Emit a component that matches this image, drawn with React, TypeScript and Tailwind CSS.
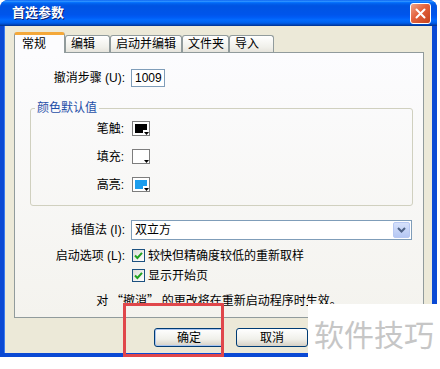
import React from "react";

function Swatch({ fill }: { fill: string }) {
  return (
    <div className="relative h-[15px] w-[18px] border border-[#7d7d7d] bg-white p-[2px]">
      <div className={`h-full w-full ${fill}`} />
      <div className="absolute bottom-0 right-0 flex h-[5px] w-[6px] items-end justify-center bg-white">
        <svg width="5" height="3" viewBox="0 0 5 3">
          <path d="M0 0H5L2.5 3Z" fill="#000" />
        </svg>
      </div>
    </div>
  );
}

function Check({ label }: { label: string }) {
  return (
    <div className="flex items-center gap-[3px]">
      <div className="flex h-[13px] w-[13px] items-center justify-center border border-[#1c5180] bg-[linear-gradient(135deg,#dcdcd7,#ffffff)]">
        <svg width="9" height="9" viewBox="0 0 9 9">
          <path d="M1 4.5L3.4 7L8 1.8" fill="none" stroke="#21a121" strokeWidth="2" />
        </svg>
      </div>
      <span>{label}</span>
    </div>
  );
}

const tabs = [
  { label: "编辑", w: "w-[45px]" },
  { label: "启动并编辑", w: "w-[72px]" },
  { label: "文件夹", w: "w-[47px]" },
  { label: "导入", w: "w-[45px]" },
];

export default function App() {
  return (
    <div className="relative h-[369px] w-[440px] overflow-hidden bg-white font-['Liberation_Sans','Noto_Sans_CJK_SC',sans-serif] text-[12px] leading-[14px] text-black">
      <div className="flex h-[357px] w-[437px] flex-col rounded-t-[8px] bg-[#0a49d4]">
        {/* title bar */}
        <div className="flex h-[26px] items-center justify-between rounded-t-[8px] bg-[linear-gradient(#0058ee_0%,#3593ff_4%,#288eff_6%,#127dff_8%,#036ffc_10%,#0262ee_14%,#0057e5_20%,#0054e3_24%,#0055eb_56%,#005bf5_66%,#026afe_76%,#0062ef_86%,#0052d6_92%,#0040ab_96%,#003092_100%)] pl-[12px] pr-[6px]">
          <span className="text-[13px] font-bold text-white [text-shadow:1px_1px_0_#0a1e6e]">首选参数</span>
          <div className="flex h-[21px] w-[21px] items-center justify-center rounded-[3px] border border-white bg-[linear-gradient(135deg,#f0a58a,#e3613b_45%,#c4421d)]">
            <svg width="11" height="11" viewBox="0 0 11 11">
              <path d="M1.5 1.5L9.5 9.5M9.5 1.5L1.5 9.5" stroke="#fff" strokeWidth="2" strokeLinecap="round" />
            </svg>
          </div>
        </div>

        {/* body */}
        <div className="ml-[4px] mr-[5px] mb-[4px] flex flex-1 flex-col border-l border-[#3a7cf0] bg-[#ece9d8] px-[9px] pt-[6px]">
          <div className="flex h-[20px] items-end">
            <div className="relative z-10 -mb-px flex h-[21px] w-[51px] items-center rounded-t-[3px] border-x border-t-[3px] border-x-[#919b9c] border-t-[#f4a83a] bg-[#fcfcfe] pl-[7px]">
              常规
            </div>
            {tabs.map((t) => (
              <div
                key={t.label}
                className={`flex h-[17px] ${t.w} items-center rounded-t-[3px] border-x border-t border-[#919b9c] bg-[linear-gradient(#ffffff,#f0f0ea_70%,#e6e4dc)] pl-[5px]`}
              >
                {t.label}
              </div>
            ))}
          </div>

          {/* panel */}
          <div className="flex h-[266px] w-[410px] flex-col border border-[#919b9c] bg-[linear-gradient(#fcfcfe,#f4f3ee)] pt-[16px]">
            <div className="flex h-[18px] items-center gap-[6px]">
              <span className="w-[110px] text-right">撤消步骤 (U):</span>
              <div className="flex h-[18px] w-[34px] items-center border border-[#7f9db9] bg-white pl-[3px]">1009</div>
            </div>

            <fieldset className="mt-[14px] ml-[15px] w-[383px] min-w-0 rounded-[3px] border border-[#d0d0bf] p-0 pb-[13px]">
              <legend className="ml-[4px] px-[2px] text-[#1f4fa8]">颜色默认值</legend>
              <div className="flex flex-col gap-[13px] pt-[6px]">
                {[
                  { label: "笔触:", fill: "bg-black" },
                  { label: "填充:", fill: "bg-white" },
                  { label: "高亮:", fill: "bg-[#1c9ded]" },
                ].map((r) => (
                  <div key={r.label} className="flex h-[15px] items-center gap-[8px]">
                    <span className="w-[93px] text-right">{r.label}</span>
                    <Swatch fill={r.fill} />
                  </div>
                ))}
              </div>
            </fieldset>

            <div className="mt-[14px] flex h-[20px] items-center gap-[6px]">
              <span className="w-[110px] text-right">插值法 (I):</span>
              <div className="flex h-[20px] w-[281px] items-center justify-between border border-[#7f9db9] bg-white pl-[3px] pr-px">
                <span>双立方</span>
                <div className="flex h-[16px] w-[17px] items-center justify-center rounded-[2px] border border-[#b7c8f2] bg-[linear-gradient(#d6e1fb,#b5c7f3)]">
                  <svg width="9" height="6" viewBox="0 0 9 6">
                    <path d="M1 1L4.5 4.5L8 1" fill="none" stroke="#4d6185" strokeWidth="2" />
                  </svg>
                </div>
              </div>
            </div>

            <div className="mt-[9px] flex h-[13px] items-center gap-[7px]">
              <span className="w-[110px] text-right">启动选项 (L):</span>
              <Check label="较快但精确度较低的重新取样" />
            </div>
            <div className="mt-[7px] flex h-[13px] items-center gap-[7px]">
              <span className="w-[110px]" />
              <Check label="显示开始页" />
            </div>

            <p className="mt-[11px] text-center font-['Noto_Sans_CJK_SC',sans-serif]">对 “撤消” 的更改将在重新启动程序时生效。</p>
          </div>

          {/* buttons */}
          <div className="mt-[10px] flex gap-[12px] pl-[140px]">
            <button className="h-[19px] w-[70px] rounded-[3px] border border-[#003c74] bg-[linear-gradient(#ffffff,#f0f0ea_60%,#d6d0c5)] leading-[14px] shadow-[inset_0_0_0_1px_#a9c4f0]">
              确定
            </button>
            <button className="h-[19px] w-[72px] rounded-[3px] border border-[#003c74] bg-[linear-gradient(#ffffff,#f0f0ea_60%,#d6d0c5)] leading-[14px]">
              取消
            </button>
          </div>
        </div>
      </div>

      {/* watermark */}
      <div className="absolute left-[308px] top-[304px] flex h-[65px] w-[132px] items-start justify-center bg-white pt-[12px]">
        <span className="font-['Noto_Sans_CJK_SC',sans-serif] text-[30px] leading-[34px] text-[#c6c6c6]">软件技巧</span>
      </div>

      {/* annotation */}
      <div className="absolute left-[123px] top-[303px] h-[54px] w-[101px] border-[3px] border-[#e0474b]" />
    </div>
  );
}
